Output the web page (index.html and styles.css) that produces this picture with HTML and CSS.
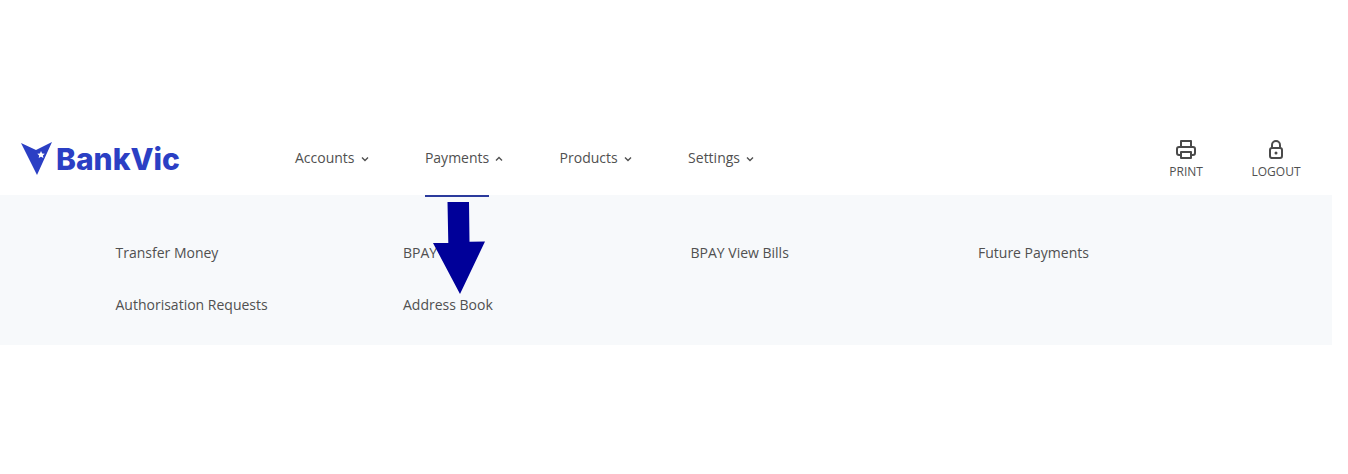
FILE: index.html
```html
<!DOCTYPE html>
<html lang="en">
<head>
  <meta charset="UTF-8" />
  <title>BankVic</title>
  <link rel="stylesheet" href="styles.css">
</head>
<body>
  <div class="page">
    <header class="header">
      <a class="logo" href="#">
        <svg class="logo-mark" width="32" height="33" viewBox="0 0 32 33">
          <path d="M0 1 L15 8 L31 0 L16 33 Z" fill="#2b3fc4"/>
          <path d="M20 9 l1.2 2.4 2.6.3-1.9 1.8.5 2.6-2.4-1.3-2.3 1.3.5-2.6-1.9-1.8 2.6-.3Z" fill="#fff"/>
        </svg>
        <span class="logo-text">BankVic</span>
      </a>
      <nav class="nav">
        <a class="nav-item" href="#">Accounts
          <svg class="chev" width="8" height="6" viewBox="0 0 8 6"><path d="M1 1.5 L4 4.5 L7 1.5"/></svg>
        </a>
        <a class="nav-item active" href="#">Payments
          <svg class="chev" width="8" height="6" viewBox="0 0 8 6"><path d="M1 4.5 L4 1.5 L7 4.5"/></svg>
        </a>
        <a class="nav-item" href="#">Products
          <svg class="chev" width="8" height="6" viewBox="0 0 8 6"><path d="M1 1.5 L4 4.5 L7 1.5"/></svg>
        </a>
        <a class="nav-item" href="#">Settings
          <svg class="chev" width="8" height="6" viewBox="0 0 8 6"><path d="M1 1.5 L4 4.5 L7 1.5"/></svg>
        </a>
      </nav>
      <div class="tools">
        <a class="tool tool-print" href="#">
          <svg width="22" height="22" viewBox="0 0 22 22" fill="none" stroke="#4a4a4a" stroke-width="2" stroke-linejoin="round">
            <path d="M6 8 V2 H16 V8"/>
            <path d="M6 16 H4 a2 2 0 0 1 -2 -2 V10 a2 2 0 0 1 2 -2 H18 a2 2 0 0 1 2 2 V14 a2 2 0 0 1 -2 2 H16"/>
            <rect x="6" y="13" width="10" height="6"/>
          </svg>
          <span>PRINT</span>
        </a>
        <a class="tool tool-logout" href="#">
          <svg width="22" height="22" viewBox="0 0 22 22" fill="none" stroke="#4a4a4a" stroke-width="2">
            <rect x="5" y="9" width="12" height="10" rx="2"/>
            <path d="M7 9 V6 a4 4 0 0 1 8 0 V9"/>
            <circle cx="11" cy="14" r="1.5" fill="#4a4a4a" stroke="none"/>
          </svg>
          <span>LOGOUT</span>
        </a>
      </div>
    </header>
    <section class="submenu">
      <a href="#">Transfer Money</a>
      <a href="#">BPAY</a>
      <a href="#">BPAY View Bills</a>
      <a href="#">Future Payments</a>
      <a href="#">Authorisation Requests</a>
      <a href="#">Address Book</a>
    </section>
  </div>
  <svg class="arrow" width="1348" height="474" viewBox="0 0 1348 474">
    <path d="M447.5 202 L469 202 L469.5 241.7 L485 241.5 L460 294 L433 243 L448.3 243 Z" fill="#000099"/>
  </svg>
</body>
</html>
```

FILE: styles.css
```css
body {
  margin: 0;
  background: #fff;
  font-family: "Open Sans", sans-serif;
  font-size: 14px;
  color: #505050;
  overflow: hidden;
}

a {
  color: inherit;
  text-decoration: none;
}

.page {
  width: 1332px;
  padding-top: 122px;
}

.header {
  display: flex;
  align-items: center;
  height: 73px;
  padding: 0 31.5px 0 21px;
}

.logo {
  display: flex;
  align-items: center;
  gap: 3px;
  width: 274px;
  flex: none;
}

.logo-text {
  font-family: Inter, sans-serif;
  font-weight: 800;
  font-size: 30px;
  color: #2b3fc4;
  line-height: 1;
}

.nav {
  display: flex;
  gap: 56.4px;
  align-self: stretch;
  flex: 1;
}

.nav-item {
  display: flex;
  align-items: center;
  gap: 6px;
  height: 70px;
  position: relative;
}

.nav-item.active::after {
  content: "";
  position: absolute;
  left: 0;
  right: 14px;
  bottom: -5px;
  height: 2px;
  background: #2b3a9c;
}

.chev {
  fill: none;
  stroke: #505050;
  stroke-width: 1.4;
  margin-top: 3px;
}

.tools {
  display: flex;
  gap: 48.5px;
  margin-top: 1px;
}

.tool {
  display: flex;
  flex-direction: column;
  align-items: center;
  gap: 3px;
  font-size: 12px;
  line-height: 16px;
}

.submenu {
  display: grid;
  grid-template-columns: repeat(4, 287.5px);
  grid-auto-rows: 52px;
  align-items: center;
  height: 150px;
  box-sizing: border-box;
  padding: 31px 0 0 115.5px;
  background: #f7f9fb;
}

.arrow {
  position: absolute;
  left: 0;
  top: 0;
  pointer-events: none;
}
```
